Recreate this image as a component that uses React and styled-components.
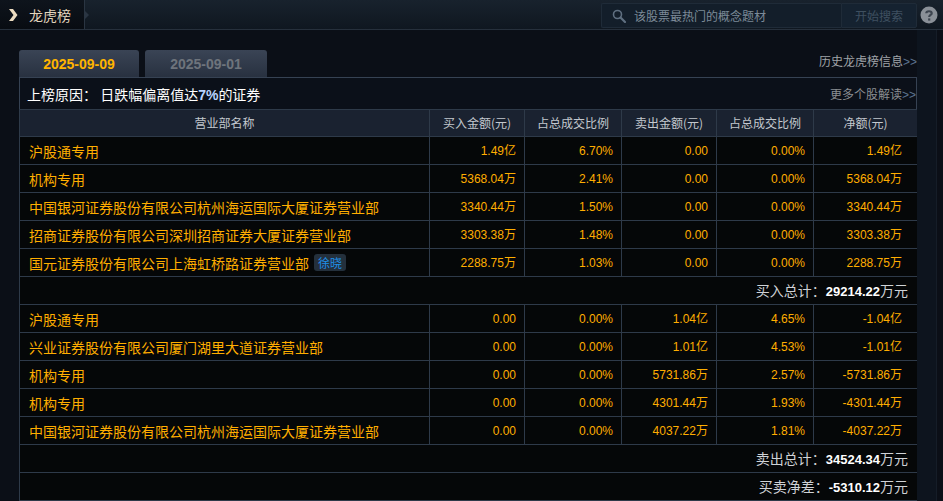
import React from "react";
import styled, { createGlobalStyle } from "styled-components";

const GlobalStyle = createGlobalStyle`
  html, body {
    margin: 0;
    padding: 0;
    background: #0b0f17;
    overflow: hidden;
  }
  body {
    font-family: "Noto Sans CJK SC", "Liberation Sans", sans-serif;
  }
`;

const CJK = `"Noto Sans CJK SC", "Liberation Sans", sans-serif`;
const NUM = `"Liberation Sans", "Noto Sans CJK SC", sans-serif`;

const Page = styled.div`
  width: 943px;
  height: 501px;
  overflow: hidden;
  background: #0b0f17;
`;

const TopBar = styled.div`
  height: 29px;
  display: flex;
  align-items: stretch;
  background: linear-gradient(#18222d, #0f1720);
  border-bottom: 1px solid #26303c;
`;

const TitleBlock = styled.div`
  position: relative;
  width: 85px;
  display: flex;
  align-items: center;
  gap: 11px;
  padding-left: 8px;
  box-sizing: border-box;
  background: linear-gradient(#0e141c, #080c12);
  border-right: 1px solid #2a3542;

  &::after {
    content: "";
    position: absolute;
    right: -5px;
    top: 11px;
    border-left: 4px solid #2a3542;
    border-top: 4px solid transparent;
    border-bottom: 4px solid transparent;
  }
`;

const TitleText = styled.span`
  color: #e2d5bd;
  font-size: 14px;
  font-family: ${CJK};
`;

const Spacer = styled.div`
  flex: 1;
`;

const SearchBox = styled.div`
  margin: 3px 0 1px;
  width: 240px;
  display: flex;
  align-items: center;
  gap: 8px;
  padding-left: 10px;
  box-sizing: border-box;
  background: #131e2a;
  border: 1px solid #1f2b38;
  border-right: none;
  border-radius: 2px 0 0 2px;
`;

const Placeholder = styled.span`
  color: #7c8a98;
  font-size: 12px;
  font-family: ${CJK};
`;

const SearchButton = styled.div`
  margin: 3px 0 1px;
  width: 74px;
  display: flex;
  align-items: center;
  justify-content: center;
  background: #152230;
  border: 1px solid #1f2b38;
  border-radius: 0 2px 2px 0;
  color: #3f5060;
  font-size: 12px;
  font-family: ${CJK};
`;

const HelpWrap = styled.div`
  width: 24px;
  padding-right: 2px;
  display: flex;
  align-items: center;
  justify-content: center;
`;

const Body = styled.div`
  display: flex;
  height: 471px;
`;

const Content = styled.div`
  width: 898px;
  padding: 20px 0 0 19px;
`;

const Track = styled.div`
  margin-left: auto;
  width: 20px;
  margin-right: 6px;
  background: #0d141e;
  border-right: 1px solid #151d28;
`;

const TabRow = styled.div`
  height: 27px;
  display: flex;
  align-items: flex-end;
  gap: 6px;
`;

const Tab = styled.div`
  width: ${(p) => p.$w}px;
  height: 27px;
  display: flex;
  align-items: center;
  justify-content: center;
  border-radius: 3px 3px 0 0;
  background: linear-gradient(#3a4455, #283140);
  color: ${(p) => (p.$active ? "#ffb400" : "#6e747c")};
  font-family: ${NUM};
  font-weight: bold;
  font-size: 14px;
`;

const HistoryLink = styled.div`
  margin-left: auto;
  align-self: center;
  color: #a0a4a8;
  font-size: 12px;
  font-family: ${CJK};
  padding-bottom: 7px;
`;

const Arrows = styled.span`
  color: #5d7590;
  font-family: ${NUM};
`;

const Panel = styled.div`
  border: 1px solid #364253;
  border-bottom: none;
`;

const ReasonBar = styled.div`
  height: 31px;
  display: flex;
  align-items: center;
  padding: 0 0 0 7px;
  background: #0b1019;
`;

const ReasonText = styled.span`
  color: #ffffff;
  font-size: 14px;
  font-family: ${CJK};
`;

const Hl = styled.span`
  color: #b9d4ff;
  font-family: ${NUM};
  font-weight: bold;
`;

const MoreLink = styled(HistoryLink)`
  padding-bottom: 0;
  color: #8a8e92;
`;

const Table = styled.table`
  width: 898px;
  margin-left: -1px;
  table-layout: fixed;
  border-collapse: collapse;
`;

const Th = styled.th`
  height: 26px;
  padding: 0;
  background: #1a2230;
  border: 1px solid #2e3a49;
  color: #c3c8ce;
  font-weight: normal;
  font-size: 12px;
  line-height: 16px;
  font-family: ${CJK};
  text-align: center;
`;

const Td = styled.td`
  height: 27px;
  padding: 0 ${(p) => (p.$pr ? p.$pr : 8)}px 0 9px;
  background: #050708;
  border: 1px solid #2e3a49;
  color: #ffae00;
  white-space: nowrap;
  line-height: 18px;
  text-align: ${(p) => (p.$left ? "left" : "right")};
  font-size: ${(p) => (p.$left ? 14 : 12)}px;
  font-family: ${(p) => (p.$left ? CJK : NUM)};
`;

const Unit = styled.span`
  font-family: ${CJK};
  font-size: 12px;
`;

const Badge = styled.span`
  display: inline-block;
  margin-left: 5px;
  padding: 0 4px;
  line-height: 17px;
  border-radius: 3px;
  background: #24303c;
  color: #1e8fe8;
  font-size: 12px;
  vertical-align: 1px;
`;

const TotalCell = styled.td`
  height: 27px;
  padding: 0 9px 0 0;
  background: #050708;
  border: 1px solid #2e3a49;
  text-align: right;
  color: #cfd2d6;
  font-size: 14px;
  line-height: 18px;
  font-family: ${CJK};
`;

const TotalValue = styled.span`
  color: #ffffff;
  font-family: ${NUM};
  font-weight: bold;
  font-size: 13px;
`;

const buyRows = [
  ["沪股通专用", "1.49", "亿", "6.70%", "0.00", "", "0.00%", "1.49", "亿"],
  ["机构专用", "5368.04", "万", "2.41%", "0.00", "", "0.00%", "5368.04", "万"],
  ["中国银河证券股份有限公司杭州海运国际大厦证券营业部", "3340.44", "万", "1.50%", "0.00", "", "0.00%", "3340.44", "万"],
  ["招商证券股份有限公司深圳招商证券大厦证券营业部", "3303.38", "万", "1.48%", "0.00", "", "0.00%", "3303.38", "万"],
  ["国元证券股份有限公司上海虹桥路证券营业部", "2288.75", "万", "1.03%", "0.00", "", "0.00%", "2288.75", "万", "徐晓"],
];

const sellRows = [
  ["沪股通专用", "0.00", "", "0.00%", "1.04", "亿", "4.65%", "-1.04", "亿"],
  ["兴业证券股份有限公司厦门湖里大道证券营业部", "0.00", "", "0.00%", "1.01", "亿", "4.53%", "-1.01", "亿"],
  ["机构专用", "0.00", "", "0.00%", "5731.86", "万", "2.57%", "-5731.86", "万"],
  ["机构专用", "0.00", "", "0.00%", "4301.44", "万", "1.93%", "-4301.44", "万"],
  ["中国银河证券股份有限公司杭州海运国际大厦证券营业部", "0.00", "", "0.00%", "4037.22", "万", "1.81%", "-4037.22", "万"],
];

function ChevronIcon() {
  return (
    <svg width="10" height="12" viewBox="0 0 10 12">
      <path d="M1 0 L5 0 L9.5 6 L5 12 L1 12 L5.5 6 Z" fill="#ecdcc0" />
    </svg>
  );
}

function SearchIcon() {
  return (
    <svg width="14" height="14" viewBox="0 0 14 14">
      <circle cx="5.5" cy="5.5" r="4" fill="none" stroke="#5f6f80" strokeWidth="1.6" />
      <line x1="8.5" y1="8.5" x2="13" y2="13" stroke="#5f6f80" strokeWidth="2.2" strokeLinecap="round" />
    </svg>
  );
}

function HelpIcon() {
  return (
    <svg width="18" height="18" viewBox="0 0 18 18">
      <circle cx="9" cy="9" r="8.5" fill="#8a9098" />
      <path d="M6.3 7.2 C6.3 4.6 11.7 4.6 11.7 7.2 C11.7 9 9.2 9 9.2 11" fill="none" stroke="#3d4550" strokeWidth="2.2" />
      <rect x="8.1" y="12.4" width="2.2" height="2.2" fill="#3d4550" />
    </svg>
  );
}

function DataRow({ row }) {
  const [name, buy, buyU, buyPct, sell, sellU, sellPct, net, netU, badge] = row;
  return (
    <tr>
      <Td $left>
        {name}
        {badge ? <Badge>{badge}</Badge> : null}
      </Td>
      <Td>
        {buy}
        {buyU && <Unit>{buyU}</Unit>}
      </Td>
      <Td>{buyPct}</Td>
      <Td>
        {sell}
        {sellU && <Unit>{sellU}</Unit>}
      </Td>
      <Td>{sellPct}</Td>
      <Td $pr={15}>
        {net}
        <Unit>{netU}</Unit>
      </Td>
    </tr>
  );
}

function TotalRow({ label, value }) {
  return (
    <tr>
      <TotalCell colSpan={6}>
        {label}：<TotalValue>{value}</TotalValue>万元
      </TotalCell>
    </tr>
  );
}

export default function App() {
  return (
    <Page>
      <GlobalStyle />
      <TopBar>
        <TitleBlock>
          <ChevronIcon />
          <TitleText>龙虎榜</TitleText>
        </TitleBlock>
        <Spacer />
        <SearchBox>
          <SearchIcon />
          <Placeholder>该股票最热门的概念题材</Placeholder>
        </SearchBox>
        <SearchButton>开始搜索</SearchButton>
        <HelpWrap>
          <HelpIcon />
        </HelpWrap>
      </TopBar>
      <Body>
        <Content>
          <TabRow>
            <Tab $w={120} $active>2025-09-09</Tab>
            <Tab $w={122}>2025-09-01</Tab>
            <HistoryLink>
              历史龙虎榜信息<Arrows>&gt;&gt;</Arrows>
            </HistoryLink>
          </TabRow>
          <Panel>
            <ReasonBar>
              <ReasonText>
                上榜原因：&nbsp;日跌幅偏离值达<Hl>7%</Hl>的证券
              </ReasonText>
              <MoreLink>
                更多个股解读<Arrows>&gt;&gt;</Arrows>
              </MoreLink>
            </ReasonBar>
            <Table>
              <colgroup>
                <col style={{ width: 410 }} />
                <col style={{ width: 95 }} />
                <col style={{ width: 97 }} />
                <col style={{ width: 95 }} />
                <col style={{ width: 97 }} />
                <col style={{ width: 104 }} />
              </colgroup>
              <thead>
                <tr>
                  <Th>营业部名称</Th>
                  <Th>买入金额(元)</Th>
                  <Th>占总成交比例</Th>
                  <Th>卖出金额(元)</Th>
                  <Th>占总成交比例</Th>
                  <Th>净额(元)</Th>
                </tr>
              </thead>
              <tbody>
                {buyRows.map((r, i) => (
                  <DataRow key={"b" + i} row={r} />
                ))}
                <TotalRow label="买入总计" value="29214.22" />
                {sellRows.map((r, i) => (
                  <DataRow key={"s" + i} row={r} />
                ))}
                <TotalRow label="卖出总计" value="34524.34" />
                <TotalRow label="买卖净差" value="-5310.12" />
              </tbody>
            </Table>
          </Panel>
        </Content>
        <Track />
      </Body>
    </Page>
  );
}
